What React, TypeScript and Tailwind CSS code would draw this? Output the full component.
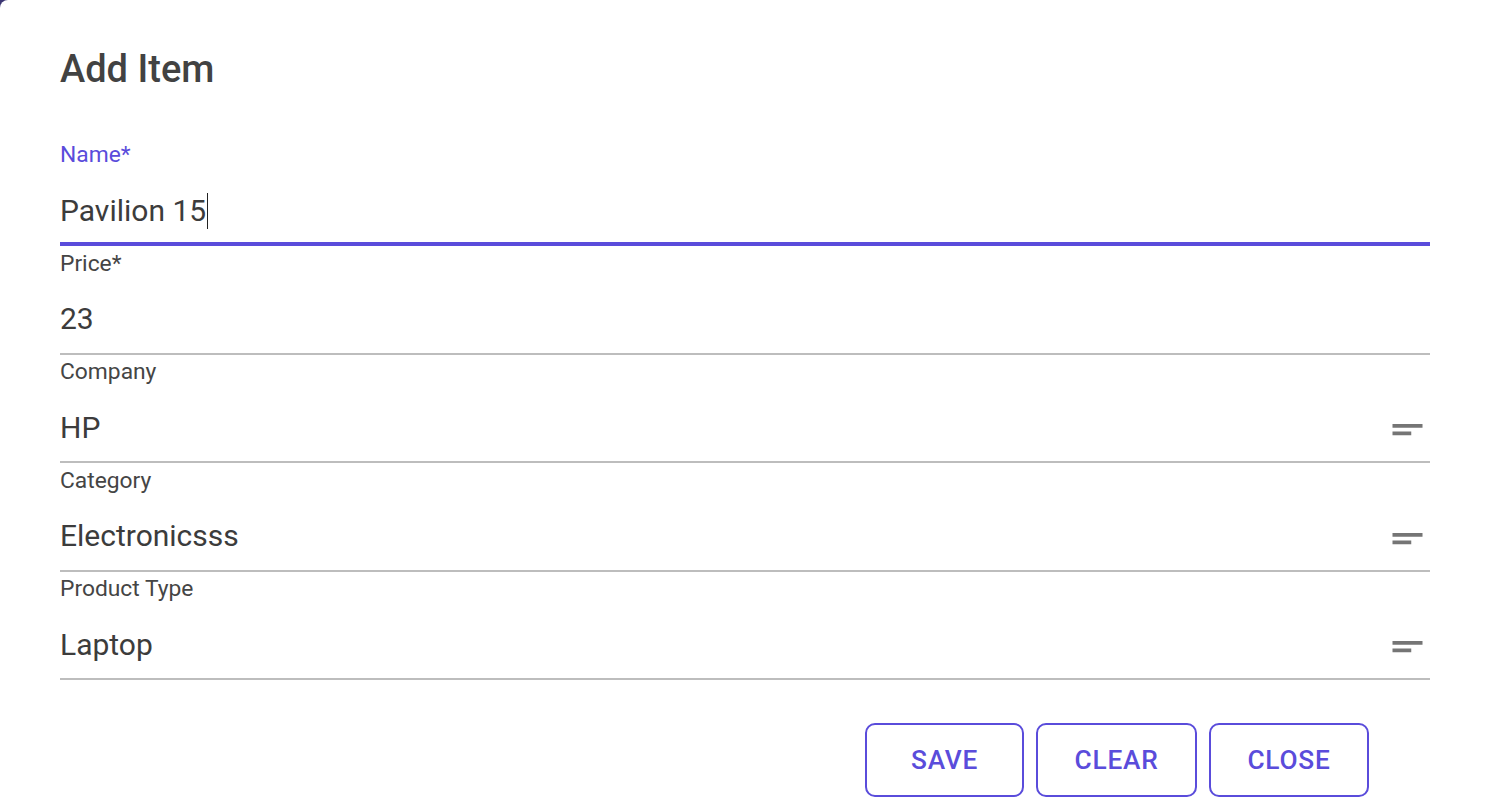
import React from "react";

const ShortTextIcon = () => (
  <svg width="45" height="45" viewBox="0 0 24 24" fill="#757575" className="shrink-0">
    <path d="M4 9h16v2H4zm0 4h10v2H4z" />
  </svg>
);

type FieldProps = {
  label: string;
  value: string;
  focused?: boolean;
  icon?: boolean;
  cursor?: boolean;
};

function Field({ label, value, focused, icon, cursor }: FieldProps) {
  return (
    <div className="flex h-[108.5px] flex-col">
      <div
        className={
          focused
            ? "mt-[4.5px] h-[26px] text-[22.8px] leading-[26px] text-[#5a4cdb]"
            : "mt-[4.5px] h-[26px] text-[22.8px] leading-[26px] text-[#454545]"
        }
      >
        {label}
      </div>
      <div className="mt-[22px] flex h-[45px] items-start justify-between">
        <div className="pt-[2.7px] text-[30px] leading-[36px] text-[#3c3c3c]">
          {value}
          {cursor && <span className="ml-[1px] inline-block h-[36px] w-[1px] bg-[#222] align-top" />}
        </div>
        {icon && <ShortTextIcon />}
      </div>
      {focused ? (
        <div className="mt-auto h-[4px] bg-[#5a4cdb]" />
      ) : (
        <div className="mt-auto h-[2px] bg-[#bdbdbd]" />
      )}
    </div>
  );
}

export default function App() {
  return (
    <div className="h-[798px] w-full overflow-hidden bg-[#3b3673] font-[Roboto,sans-serif]">
      <div className="h-full rounded-tl-[8px] bg-white pl-[60px] pr-[59px] pt-[39px]">
        <h2 className="h-[60px] text-[38px] font-medium leading-[60px] text-[#424242]">Add Item</h2>
        <div className="mt-[38.5px] flex flex-col">
          <Field label="Name*" value="Pavilion 15" focused cursor />
          <Field label="Price*" value="23" />
          <Field label="Company" value="HP" icon />
          <Field label="Category" value="Electronicsss" icon />
          <Field label="Product Type" value="Laptop" icon />
        </div>
        <div className="mt-[43px] flex justify-end gap-[12px] pr-[61px]">
          <button className="h-[74px] w-[159px] rounded-[10px] border-2 border-[#5a4cdb] pt-[1px] text-[26.25px] font-medium tracking-[0.75px] text-[#5a4cdb]">
            SAVE
          </button>
          <button className="h-[74px] w-[161px] rounded-[10px] border-2 border-[#5a4cdb] pt-[1px] text-[26.25px] font-medium tracking-[0.75px] text-[#5a4cdb]">
            CLEAR
          </button>
          <button className="h-[74px] w-[160px] rounded-[10px] border-2 border-[#5a4cdb] pt-[1px] text-[26.25px] font-medium tracking-[0.75px] text-[#5a4cdb]">
            CLOSE
          </button>
        </div>
      </div>
    </div>
  );
}
